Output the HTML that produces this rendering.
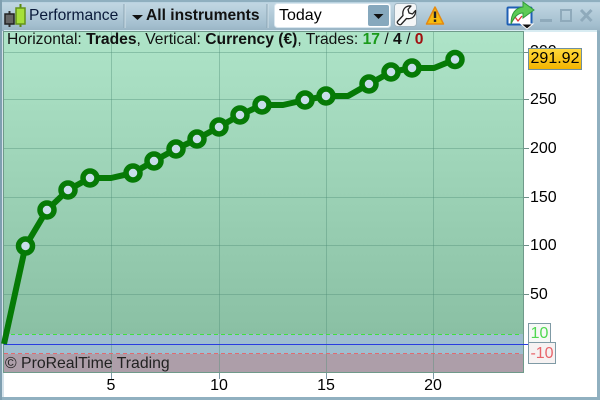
<!DOCTYPE html>
<html><head><meta charset="utf-8">
<style>
html,body{margin:0;padding:0;width:600px;height:400px;overflow:hidden;background:#fff;}
body{position:relative;font-family:"Liberation Sans",sans-serif;}
div{position:absolute;box-sizing:border-box;}
.t{white-space:nowrap;color:#000;line-height:18px;height:18px;}
.yl{left:530px;font-size:16px;color:#000;}
.xl{font-size:16px;top:377px;width:30px;text-align:center;}
</style></head>
<body>
<!-- frame -->
<div style="left:0;top:0;width:600px;height:400px;background:#90b0c0"></div>
<div style="left:0;top:0;width:600px;height:31px;background:linear-gradient(#abc9da,#c0d6e2 12%,#a4bfcf 80%,#98b4c4)"></div>
<div style="left:0;top:0;width:600px;height:2px;background:#8fafbf"></div>
<div style="left:0;top:0;width:2px;height:400px;background:#7f9fb0"></div>
<div style="left:2px;top:31px;width:2px;height:366px;background:#d4e2ea"></div>
<div style="left:4px;top:31px;width:593px;height:366px;background:#fff"></div>
<div style="left:4px;top:30px;width:593px;height:2px;background:#d8ecf2"></div>

<!-- toolbar -->
<svg style="position:absolute;left:0;top:0" width="600" height="32">
  <path d="M9.500 11v16" stroke="#333" stroke-width="2"/>
  <rect x="5" y="14" width="9" height="10" fill="#666" stroke="#222" stroke-width="1.500"/>
  <path d="M20.500 4v23" stroke="#5c8a10" stroke-width="2"/>
  <rect x="16" y="8" width="9" height="16" fill="#a6e03a" stroke="#64921a" stroke-width="1.500"/>
  <path d="M124 4v24M267 4v24" stroke="#8aa4b3" stroke-width="1"/>
  <path d="M125 4v24M268 4v24" stroke="#d0e0e8" stroke-width="1"/>
  <path d="M132 15h11l-5.500 5z" fill="#111"/>
  <!-- combobox -->
  <rect x="274.500" y="3.500" width="116" height="24" rx="3" fill="#fff" stroke="#d8e6ee"/>
  <rect x="368" y="5" width="21" height="21" rx="2" fill="#86a8bd"/>
  <path d="M373.500 14h10l-5 5z" fill="#111"/>
  <!-- wrench button -->
  <rect x="394.500" y="3.500" width="22" height="23" rx="3" fill="#f4f6f7" stroke="#a0b4c0"/>
  <path d="M397.500 21.500L403 15.500C402 10 405 5.500 411 6L408 9.500L409 13L412.500 14L415.500 10.500C416 16 412 19.500 406.500 18.500L401 24.500C399.500 25.500 396.500 23 397.500 21.500z" fill="#fff" stroke="#222" stroke-width="1.300" stroke-linejoin="round"/>
  <!-- warning -->
  <path d="M435 7l8.500 17h-17z" fill="#f5bc10" stroke="#e58a10" stroke-width="1.500" stroke-linejoin="round"/>
  <path d="M435 11.500v6.500" stroke="#222" stroke-width="2.400"/>
  <rect x="433.800" y="19.500" width="2.400" height="2.400" fill="#222"/>
  <!-- export icon -->
  <rect x="507.500" y="7.500" width="24" height="17" rx="1" fill="#fff" stroke="#1f5fb5" stroke-width="2"/>
  <path d="M511 23l4-6 3 4 4-5" fill="none" stroke="#d33" stroke-width="1.300"/>
  <path d="M511 24c0-10 4-16 12-17V2l11 8-11 8v-5c-5 0-9 4-12 11z" fill="#5ecb55" stroke="#2f9a3a" stroke-width="1"/>
  <path d="M521 24h12l-6 5z" fill="#111" stroke="#fff" stroke-width="1"/>
  <!-- window controls -->
  <rect x="540" y="19" width="12" height="3" fill="#8faabb"/>
  <rect x="561" y="10" width="10" height="11" fill="none" stroke="#8faabb" stroke-width="2"/>
  <path d="M581 10l10.500 11M591.500 10l-10.500 11" stroke="#8faabb" stroke-width="3"/>
</svg>
<div class="t" style="left:29px;top:7px;font-size:15.600px;color:#0a1a3a">Performance</div>
<div class="t" style="left:146px;top:7px;font-size:15.600px;font-weight:bold;color:#111">All instruments</div>
<div class="t" style="left:279px;top:7px;font-size:16px;">Today</div>

<!-- y axis labels -->
<div class="t yl" style="top:43px">300</div>
<div class="t yl" style="top:91px">250</div>
<div class="t yl" style="top:140px">200</div>
<div class="t yl" style="top:189px">150</div>
<div class="t yl" style="top:237px">100</div>
<div class="t yl" style="top:286px">50</div>
<!-- x axis labels -->
<div class="t xl" style="left:96px">5</div>
<div class="t xl" style="left:204px">10</div>
<div class="t xl" style="left:311px">15</div>
<div class="t xl" style="left:418px">20</div>

<!-- plot -->
<svg style="position:absolute;left:0;top:0" width="600" height="400">
  <defs>
    <linearGradient id="g" x1="0" y1="0" x2="0" y2="1">
      <stop offset="0" stop-color="#aee4c8"/>
      <stop offset="1" stop-color="#8ac0a4"/>
    </linearGradient>
  </defs>
  <rect x="4" y="32" width="519" height="302" fill="url(#g)"/>
  <rect x="4" y="334" width="519" height="20" fill="#9fbecf"/>
  <rect x="4" y="354" width="519" height="18" fill="#ad9ea9"/>
  <g stroke="#4f8f78" stroke-opacity=".4" stroke-width="1">
    <path d="M4 52.500H523M4 99.500H523M4 148.500H523M4 197.500H523M4 245.500H523M4 294.500H523"/>
    <path d="M111.500 32V372M219.500 32V372M326.500 32V372M433.500 32V372"/>
  </g>
  <path d="M111.500 372v7M219.500 372v7M326.500 372v7M433.500 372v7" stroke="#7f9aa8"/>
  <path d="M523 52.500h6M523 99.500h6M523 148.500h6M523 197.500h6M523 245.500h6M523 294.500h6M523 344.500h6" stroke="#6f8f88"/>
  <rect x="3.500" y="31.500" width="520" height="341" fill="none" stroke="#6f9a8a"/>
  <path d="M4 334.500H522" stroke="#3fe03f" stroke-dasharray="4 3"/>
  <path d="M4 344.500H528" stroke="#2a3ce0"/>
  <path d="M4 353.500H522" stroke="#e06a70" stroke-dasharray="4 3"/>
  <polyline points="4,344 25.500,246 47,210 68,190 90,178 111,178 133,173 154,161 176,149 197,139 219,127 240,115 262,105 283,105 305,100 326,96 348,96 369,84 391,72 412,68 434,68 455,59.500" fill="none" stroke="#067a06" stroke-width="6" stroke-linejoin="round"/>
  <g fill="#c8deea" stroke="#067a06" stroke-width="5.500">
    <circle cx="25.500" cy="246" r="7"/><circle cx="47" cy="210" r="7"/><circle cx="68" cy="190" r="7"/><circle cx="90" cy="178" r="7"/><circle cx="133" cy="173" r="7"/><circle cx="154" cy="161" r="7"/><circle cx="176" cy="149" r="7"/><circle cx="197" cy="139" r="7"/><circle cx="219" cy="127" r="7"/><circle cx="240" cy="115" r="7"/><circle cx="262" cy="105" r="7"/><circle cx="305" cy="100" r="7"/><circle cx="326" cy="96" r="7"/><circle cx="369" cy="84" r="7"/><circle cx="391" cy="72" r="7"/><circle cx="412" cy="68" r="7"/><circle cx="455" cy="59.500" r="7"/>
  </g>
</svg>

<div class="t" style="left:7px;top:31px;font-size:15.650px;color:#111">Horizontal: <b>Trades</b>, Vertical: <b>Currency (€)</b>, Trades: <b style="color:#1a9a1a">17</b> / <b>4</b> / <b style="color:#a01010">0</b></div>
<div class="t" style="left:5px;top:355px;font-size:15.800px;color:#222">© ProRealTime Trading</div>

<!-- labels -->
<div style="left:528px;top:48px;width:54px;height:22px;background:linear-gradient(#ffd83a,#f2b400);border:1px solid #6f8f9f;font-size:16px;line-height:20px;text-align:center;color:#000">291.92</div>
<div style="left:528px;top:323px;width:23px;height:20px;background:#f6f8f6;border:1px solid #7f9aa5;font-size:16px;line-height:20px;text-align:center;color:#4fd84f">10</div>
<div style="left:528px;top:342px;width:28px;height:22px;background:#f6f2f2;border:1px solid #7f9aa5;font-size:16px;line-height:22px;text-align:center;color:#e8656b">-10</div>
</body></html>
